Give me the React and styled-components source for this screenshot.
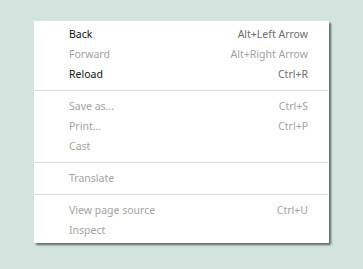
import React from "react";
import styled, { createGlobalStyle } from "styled-components";

const Global = createGlobalStyle`
  html, body { margin: 0; padding: 0; background: #d3e4de; }
  body { width: 363px; height: 269px; overflow: hidden; }
`;

const Page = styled.div`
  padding: 21px 0 0 34px;
`;

const Menu = styled.div`
  width: 295px;
  box-sizing: border-box;
  background: #fff;
  padding: 3px 0 3px;
  box-shadow: 2px 2px 2px rgba(0, 0, 0, 0.55);
  font-family: "Noto Sans", sans-serif;
  font-size: 10.5px;
`;

const Row = styled.div`
  display: flex;
  justify-content: space-between;
  align-items: center;
  height: 20px;
  padding: 0 21px 0 35px;
  color: ${(p) => (p.$disabled ? "#a3a3a3" : "#111")};
`;

const Shortcut = styled.span`
  color: ${(p) => (p.$disabled ? "#a3a3a3" : "#6d6d6d")};
`;

const Sep = styled.div`
  height: 1px;
  background: #dcdcdc;
  margin: 6px 1px 5px;
`;

const groups = [
  [
    ["Back", "Alt+Left Arrow", false],
    ["Forward", "Alt+Right Arrow", true],
    ["Reload", "Ctrl+R", false],
  ],
  [
    ["Save as...", "Ctrl+S", true],
    ["Print...", "Ctrl+P", true],
    ["Cast", "", true],
  ],
  [["Translate", "", true]],
  [
    ["View page source", "Ctrl+U", true],
    ["Inspect", "", true],
  ],
];

export default function App() {
  return (
    <>
      <Global />
      <Page>
        <Menu>
          {groups.map((g, gi) => (
            <React.Fragment key={gi}>
              {gi > 0 && <Sep />}
              {g.map(([label, sc, dis]) => (
                <Row key={label} $disabled={dis}>
                  <span>{label}</span>
                  <Shortcut $disabled={dis}>{sc}</Shortcut>
                </Row>
              ))}
            </React.Fragment>
          ))}
        </Menu>
      </Page>
    </>
  );
}
